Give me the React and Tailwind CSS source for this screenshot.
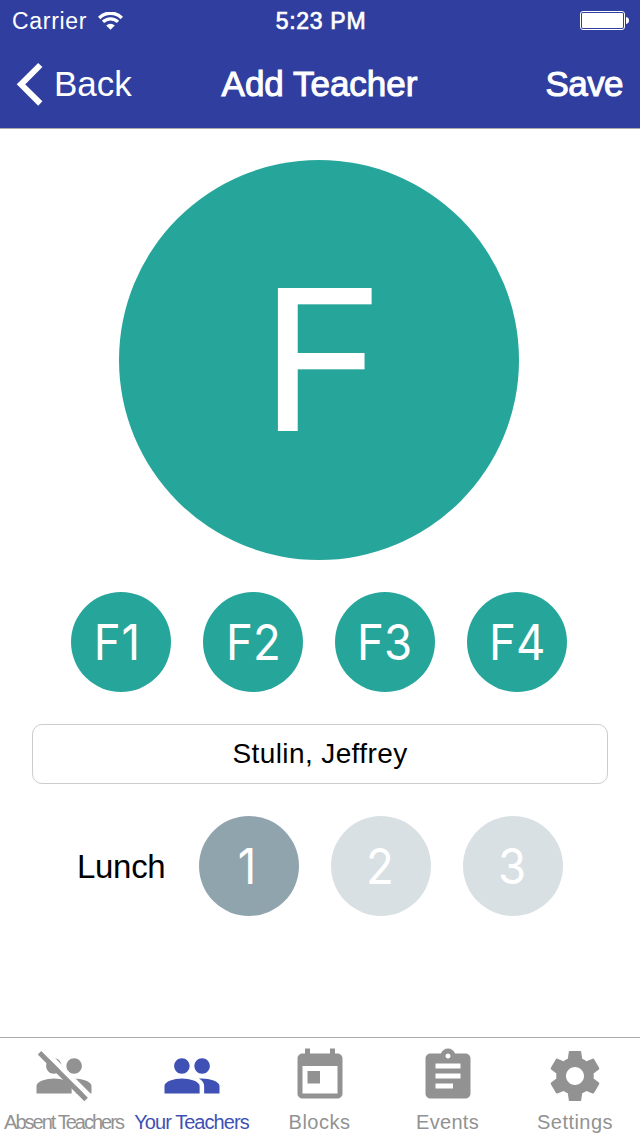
const PEOPLE =
  "M16.05 11.05c1.71 0 3.1-1.39 3.1-3.1s-1.39-3.1-3.1-3.1-3.1 1.39-3.1 3.1 1.39 3.1 3.1 3.1zm-8.1 0c1.71 0 3.1-1.39 3.1-3.1s-1.39-3.1-3.1-3.1-3.1 1.39-3.1 3.1 1.39 3.1 3.1 3.1zM8 12.95c-3.1 0-7 1.15-7 3V19h14.050v-3.05c0-1.850-3.950-3-7.050-3zm8 0c-.45 0-.85.02-1.250.06 1.350.8 2.100 1.750 2.100 2.940V19H23v-3.05c0-1.850-3.900-3-7-3z";
const TODAY =
  "M19 3h-1V1h-2v2H8V1H6v2H5c-1.11 0-1.99.9-1.99 2L3 19c0 1.1.89 2 2 2h14c1.1 0 2-.9 2-2V5c0-1.1-.9-2-2-2zm0 16H5V8h14v11zM7 10h5v5H7z";
const ASSIGNMENT =
  "M19 3h-4.18C14.4 1.84 13.3 1 12 1c-1.3 0-2.4.84-2.82 2H5c-1.1 0-2 .9-2 2v14c0 1.1.9 2 2 2h14c1.1 0 2-.9 2-2V5c0-1.1-.9-2-2-2zm-7 0c.55 0 1 .45 1 1s-.45 1-1 1-1-.45-1-1 .45-1 1-1zm2 14H7v-2h7v2zm3-4H7v-2h10v2zm0-4H7V7h10v2z";
const SETTINGS =
  "M19.43 12.98c.04-.32.07-.64.07-.98s-.03-.66-.07-.98l2.11-1.65c.19-.15.24-.42.12-.64l-2-3.46c-.12-.22-.39-.3-.61-.22l-2.49 1c-.52-.4-1.08-.73-1.69-.98l-.38-2.65C14.46 2.18 14.25 2 14 2h-4c-.25 0-.46.18-.49.42l-.38 2.65c-.61.25-1.17.59-1.69.98l-2.49-1c-.23-.09-.49 0-.61.22l-2 3.46c-.13.22-.07.49.12.64l2.11 1.65c-.04.32-.07.65-.07.98s.03.66.07.98l-2.11 1.65c-.19.15-.24.42-.12.64l2 3.46c.12.22.39.3.61.22l2.49-1c.52.4 1.08.73 1.69.98l.38 2.65c.03.24.24.42.49.42h4c.25 0 .46-.18.49-.42l.38-2.65c.61-.25 1.17-.59 1.69-.98l2.49 1c.23.09.49 0 .61-.22l2-3.46c.12-.22.07-.49-.12-.64l-2.11-1.65zM12 15.6c-1.98 0-3.6-1.62-3.6-3.6s1.62-3.6 3.6-3.6 3.6 1.62 3.6 3.6-1.62 3.6-3.6 3.6z";

const tabs = [
  { label: "Absent Teachers", path: PEOPLE, slashed: true, text: "tracking-[-1.98px] pr-px" },
  { label: "Your Teachers", path: PEOPLE, active: true, text: "tracking-[-0.95px] pr-px" },
  { label: "Blocks", path: TODAY, text: "tracking-[0.5px] pr-px" },
  { label: "Events", path: ASSIGNMENT, text: "tracking-[0.3px] pr-px" },
  { label: "Settings", path: SETTINGS, box: "pr-0.5", text: "tracking-[0.45px]" },
];

function StatusBar() {
  return (
    <div className="grid h-10 grid-cols-3 items-center pr-[10px] pl-3 leading-none">
      <div className="flex items-center gap-[11px] pt-px">
        <span className="pt-px text-[23px] tracking-[0.7px]">Carrier</span>
        <svg className="h-[18px] w-[25px]" viewBox="0 0 25 18" fill="none" stroke="currentColor">
          <path d="M1.200 5.900a16 16 0 0 1 22.600 0" strokeWidth="3.5" />
          <path d="M5 9.900a10.600 10.600 0 0 1 15 0" strokeWidth="3.2" />
          <path d="M12.500 17.800 8.200 13.500a6 6 0 0 1 8.600 0z" fill="currentColor" stroke="none" />
        </svg>
      </div>
      <span className="pt-0.5 text-center text-[23px] tracking-[0.7px] whitespace-nowrap [-webkit-text-stroke:0.7px_white]">
        5:23 PM
      </span>
      <svg className="h-5 w-[50px] justify-self-end" viewBox="0 0 50 20">
        <rect x="0.5" y="1.5" width="44" height="18" rx="2.5" fill="none" stroke="white" />
        <rect x="2" y="3" width="41" height="15" rx="1" fill="white" />
        <path d="M46 7c2 .3 3 1.500 3 3.500s-1 3.200-3 3.500z" fill="white" />
      </svg>
    </div>
  );
}

function NavBar() {
  return (
    <div className="grid h-[88px] grid-cols-[1fr_auto_1fr] items-center pr-[17px] pb-px pl-4 text-[35px] leading-none">
      <div className="flex items-center gap-[11px]">
        <svg className="h-[44px] w-[27px]" viewBox="0 0 27 44" fill="none" stroke="white" strokeWidth="6">
          <path d="M24.300 3 5 22.300 24.300 41.500" />
        </svg>
        <span>Back</span>
      </div>
      <span className="[-webkit-text-stroke:1px_white]">Add Teacher</span>
      <span className="justify-self-end tracking-[-0.6px] [-webkit-text-stroke:1px_white]">Save</span>
    </div>
  );
}

function Bubble({ label, color, inset = "" }) {
  return (
    <div
      className={`flex size-[100px] items-center justify-center rounded-full font-[Inter,sans-serif] text-[49px] leading-none text-white ${inset} ${color}`}
    >
      <span className="scale-x-93">{label}</span>
    </div>
  );
}

function Tab({ label, path, slashed, active, box = "", text }) {
  return (
    <div className={`flex w-32 flex-col items-center pt-2 ${box} ${active ? "text-[#3f51b5]" : "text-[#929292]"}`}>
      <svg className="size-[60px]" viewBox="0 0 24 24" fill="currentColor">
        <path d={path} />
        {slashed && (
          <>
            <path d="M3.900 1.660 22.700 20.460" stroke="white" strokeWidth="2" />
            <path d="M2.200 2.720 20.850 21.370" stroke="currentColor" strokeWidth="2" />
          </>
        )}
      </svg>
      <span className={`mt-1 text-[20px] leading-6 whitespace-nowrap ${text}`}>{label}</span>
    </div>
  );
}

export default function App() {
  return (
    <div className="flex h-[1136px] w-[640px] flex-col overflow-hidden bg-white font-['Liberation_Sans',Arial,sans-serif]">
      <header className="border-b border-[#a9a9a9] bg-[#303f9f] text-white">
        <StatusBar />
        <NavBar />
      </header>

      <main className="flex flex-1 flex-col pt-[31px]">
        <div className="ml-[119px] flex size-[400px] items-center justify-center rounded-full bg-[#26a69a] pb-0.5 pl-[6px] font-[Inter,sans-serif] text-[197px] leading-none text-white">
          <span className="scale-x-108">F</span>
        </div>

        <div className="mt-8 ml-[71px] flex gap-8">
          <Bubble label="F1" color="bg-[#26a69a]" inset="pr-[7px] tracking-[1px]" />
          <Bubble label="F2" color="bg-[#26a69a]" />
          <Bubble label="F3" color="bg-[#26a69a]" />
          <Bubble label="F4" color="bg-[#26a69a]" />
        </div>

        <div className="mx-8 mt-8 flex h-[60px] items-center justify-center rounded-[10px] border border-[#cccccc] text-[28px] leading-none tracking-[0.4px] text-black">
          <span>Stulin, Jeffrey</span>
        </div>

        <div className="mt-8 ml-[77px] flex items-center">
          <span className="w-[122px] text-[33px] leading-none tracking-[-0.3px] text-black">Lunch</span>
          <div className="flex gap-8">
            <Bubble label="1" color="bg-[#90a4ae]" inset="pr-1" />
            <Bubble label="2" color="bg-[#d9e0e3]" inset="pr-0.5" />
            <Bubble label="3" color="bg-[#d9e0e3]" inset="pr-0.5" />
          </div>
        </div>
      </main>

      <nav className="flex h-[99px] border-t border-[#adadad]">
        {tabs.map((tab) => (
          <Tab key={tab.label} {...tab} />
        ))}
      </nav>
    </div>
  );
}
